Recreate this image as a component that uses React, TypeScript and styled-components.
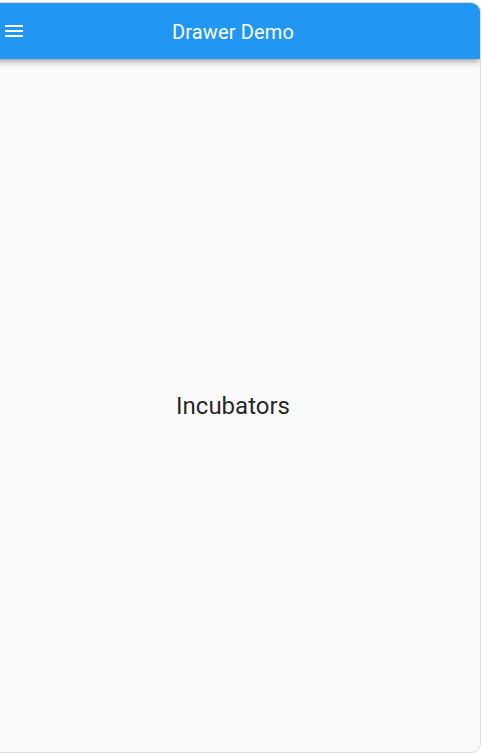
import React from "react";
import styled, { createGlobalStyle } from "styled-components";

const Global = createGlobalStyle`
  html, body { margin: 0; padding: 0; background: #ffffff; overflow: hidden; }
  body { font-family: Roboto, "Noto Sans", sans-serif; }
`;

const Frame = styled.div`
  box-sizing: border-box;
  margin: 2px 0 0 -15px;
  width: 496px;
  height: 751px;
  border: 1px solid #dcdcdc;
  border-radius: 10px;
  overflow: hidden;
  background: #fafafa;
  display: flex;
  flex-direction: column;
`;

const AppBar = styled.header`
  height: 56px;
  flex: none;
  background: #2196f3;
  display: flex;
  align-items: center;
  position: relative;
  box-shadow: 0 2px 4px -1px rgba(0, 0, 0, 0.2), 0 4px 5px 0 rgba(0, 0, 0, 0.14),
    0 1px 10px 0 rgba(0, 0, 0, 0.12);
  z-index: 1;
`;

const MenuButton = styled.button`
  width: 56px;
  height: 56px;
  flex: none;
  border: 0;
  padding: 0;
  background: transparent;
  display: flex;
  align-items: center;
  justify-content: center;
  color: #ffffff;
`;

const Title = styled.h1`
  flex: 1;
  margin: 2px 56px 0 0;
  text-align: center;
  font-family: Roboto, sans-serif;
  font-weight: 400;
  font-size: 20px;
  color: #ffffff;
  letter-spacing: 0.15px;
`;

const Body = styled.main`
  flex: 1;
  display: flex;
  align-items: center;
  justify-content: center;
`;

const Label = styled.span`
  font-family: Roboto, sans-serif;
  font-size: 24px;
  font-weight: 400;
  color: rgba(0, 0, 0, 0.87);
`;

export default function App() {
  return (
    <>
      <Global />
      <Frame>
        <AppBar>
          <MenuButton aria-label="menu">
            <svg width="24" height="24" viewBox="0 0 24 24" fill="currentColor">
              <path d="M3 18h18v-2H3v2zm0-5h18v-2H3v2zm0-7v2h18V6H3z" />
            </svg>
          </MenuButton>
          <Title>Drawer Demo</Title>
        </AppBar>
        <Body>
          <Label>Incubators</Label>
        </Body>
      </Frame>
    </>
  );
}
